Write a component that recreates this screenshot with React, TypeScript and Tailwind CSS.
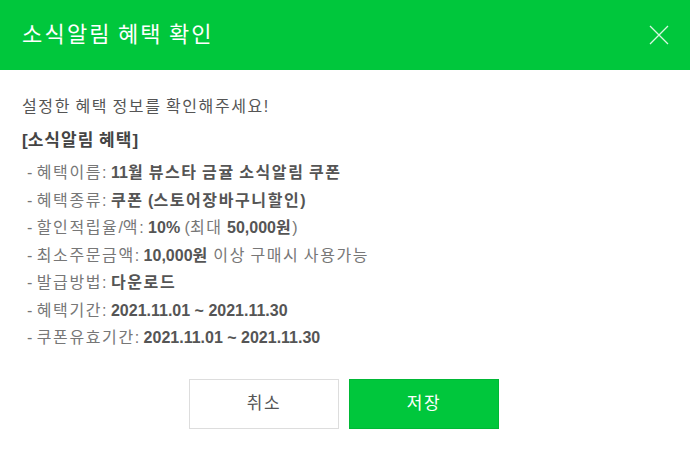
import React from "react";

function K({ text }: { text: string }) {
  const parts = text.split(/([\uAC00-\uD7A3]+)/);
  return (
    <>
      {parts.map((p, i) =>
        /[\uAC00-\uD7A3]/.test(p) ? (
          <span key={i} className="tracking-[0.1em]">
            {p}
          </span>
        ) : (
          <React.Fragment key={i}>{p}</React.Fragment>
        )
      )}
    </>
  );
}

type Seg = [string, boolean];
const items: { label: string; value: Seg[] }[] = [
  { label: "혜택이름", value: [["11월 뷰스타 금귤 소식알림 쿠폰", true]] },
  { label: "혜택종류", value: [["쿠폰 (스토어장바구니할인)", true]] },
  {
    label: "할인적립율/액",
    value: [
      ["10%", true],
      [" (최대 ", false],
      ["50,000원", true],
      [")", false],
    ],
  },
  {
    label: "최소주문금액",
    value: [
      ["10,000원", true],
      [" 이상 구매시 사용가능", false],
    ],
  },
  { label: "발급방법", value: [["다운로드", true]] },
  { label: "혜택기간", value: [["2021.11.01 ~ 2021.11.30", true]] },
  { label: "쿠폰유효기간", value: [["2021.11.01 ~ 2021.11.30", true]] },
];

export default function App() {
  return (
    <div
      className="w-[690px] h-[457px] bg-white flex flex-col overflow-hidden"
      style={{ fontFamily: '"Liberation Sans", "Noto Sans CJK KR", sans-serif' }}
    >
      <div className="h-[70px] bg-[#00c73c] flex items-center justify-between pl-[22px] pr-[21px] shrink-0">
        <h1 className="text-white text-[22px] leading-none font-normal">
          <K text="소식알림 혜택 확인" />
        </h1>
        <svg width="20" height="20" viewBox="0 0 20 20" className="block">
          <path d="M1 1L19 19M19 1L1 19" stroke="#ffffff" strokeOpacity="0.85" strokeWidth="1.3" />
        </svg>
      </div>
      <div className="pl-[22px] pt-[26px]">
        <p className="text-[16px] leading-[22px] text-[#555]">
          <K text="설정한 혜택 정보를 확인해주세요!" />
        </p>
        <p className="mt-[12px] text-[17px] leading-[22px] font-bold text-[#444]">
          [<span className="tracking-[0.06em]">소식알림</span> <span className="tracking-[0.06em]">혜택</span>]
        </p>
        <ul className="mt-[7px] pl-[5px] text-[16px] text-[#777]">
          {items.map((it) => (
            <li key={it.label} className="h-[27.5px] leading-[27.5px] whitespace-nowrap">
              - <K text={it.label} />:{" "}
              {it.value.map(([t, b], i) =>
                b ? (
                  <b key={i} className="font-bold text-[#555]">
                    <K text={t} />
                  </b>
                ) : (
                  <K key={i} text={t} />
                )
              )}
            </li>
          ))}
        </ul>
      </div>
      <div className="mt-[27.5px] flex justify-center gap-[10px] pr-[2px]">
        <button className="w-[150px] h-[50px] border border-[#dddddd] bg-white text-[#555] text-[17px]">
          <K text="취소" />
        </button>
        <button className="w-[150px] h-[50px] border border-[#00b836] bg-[#00c73c] text-white text-[17px]">
          <K text="저장" />
        </button>
      </div>
    </div>
  );
}
